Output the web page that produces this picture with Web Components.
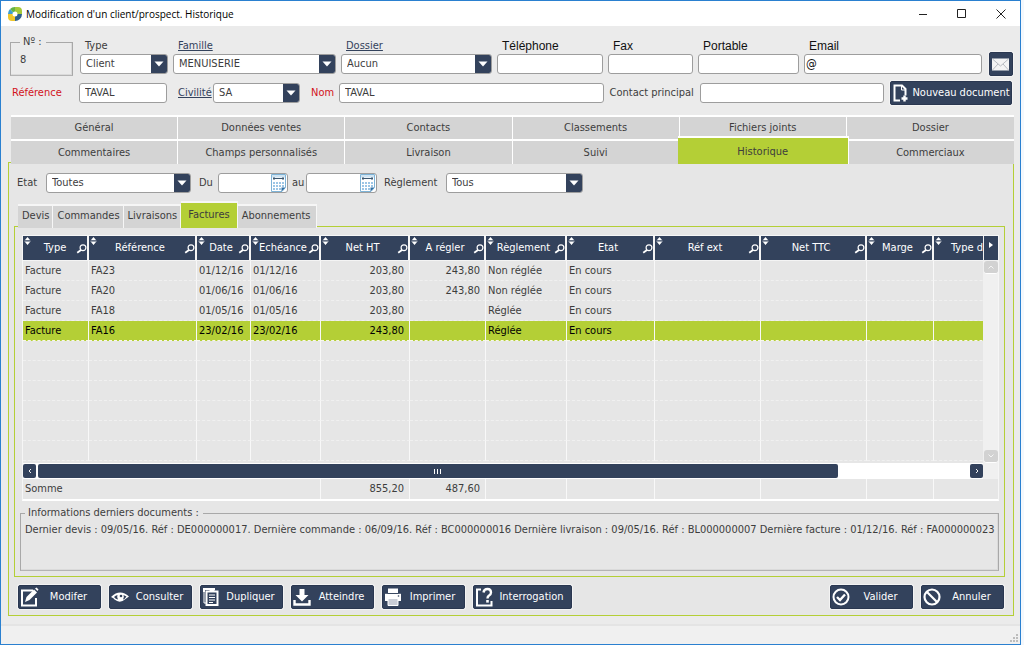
<!DOCTYPE html>
<html lang="fr">
<head>
<meta charset="utf-8">
<meta name="viewport" content="width=device-width, initial-scale=1">
<title>Modification d'un client/prospect. Historique</title>
<style>
html,body{margin:0;height:100%}
body{
  --navy:#33425c;--green:#b4cf36;--ink:#3d3d3d;--face:#ebebeb;--panel:#e6e6e6;--tab:#d4d4d4;--line:#a8a8a8;--red:#d2121c;
  --ui:"DejaVu Sans Condensed","Noto Sans",sans-serif;
  font:11px/14px var(--ui);color:var(--ink);background:#f4f8fc}
</style>
</head>
<body>
<client-window></client-window>
<script>
const html = (s, ...v) => String.raw(s, ...v);
class Base extends HTMLElement {
  constructor(){ super(); this.attachShadow({mode:'open'}); }
  connectedCallback(){ this.shadowRoot.innerHTML = '<style>*{box-sizing:border-box}' + this.styles() + '</style>' + this.view(); }
  attr(n, d=''){ return this.getAttribute(n) ?? d; }
}

const control = `
:host{display:flex;flex-direction:column;min-width:0;gap:1px}
:host([inline]){flex-direction:row;align-items:center;gap:var(--gap,8px)}
label{white-space:nowrap;padding-left:5px;line-height:14px;flex:none}
:host([inline]) label{padding:0;width:var(--lw,auto)}
:host([alt]) label{font-family:"Liberation Sans",sans-serif;font-size:12px;color:#111}
:host([required]) label{color:var(--red)}
label a{color:var(--navy)}
.box{position:relative;flex:1 1 auto;min-width:0;height:20px;display:flex;background:#fff;border:1px solid #9d9d9d;border-radius:3px;overflow:hidden}
:host([inline]) .box{flex:1 1 0}
input,select{appearance:none;border:0;outline:0;margin:0;padding:0 0 0 5px;width:100%;min-width:0;height:18px;background:transparent;font:11px/18px var(--ui);color:var(--ink)}
:host([alt]) input{padding-left:1px;font-size:12px;color:#111}
`;
const lbl = el => el.hasAttribute('link') ? `<a href="#">${el.attr('label')}</a>` : el.attr('label');

customElements.define('text-field', class extends Base {
  styles(){ return control; }
  view(){ return html`<label for="c">${lbl(this)}</label><div class="box"><input id="c" type="text" value="${this.attr('value')}"></div>`; }
});
customElements.define('select-field', class extends Base {
  styles(){ return control + `.arrow{position:absolute;right:0;top:0;bottom:0;width:16px;background:var(--navy);pointer-events:none}svg{display:block}`; }
  view(){ return html`<label for="c">${lbl(this)}</label><div class="box"><select id="c"><option>${this.attr('value')}</option></select><span class="arrow"><svg width="16" height="18"><path d="M3.5 6.5h9L8 11.500z" fill="#fff"/></svg></span></div>`; }
});
customElements.define('date-field', class extends Base {
  styles(){ return control + `button{border:0;padding:0;margin:0;background:none;flex:none;width:17px;height:18px}svg{display:block}`; }
  view(){ return html`<label for="c">${lbl(this)}</label><div class="box"><input id="c" type="text"><button type="button" aria-label="Calendrier"><svg width="17" height="18" viewBox="0 0 17 18"><path d="M1.500.5h14v13l-3.500 4H1.500z" fill="#fff" stroke="#7eb4d8"/><path d="M2 1h13v2.500H2z" fill="#cfe4f3"/><path d="M3 4.500h11" stroke="#3c566e"/><path d="M4 3v3M13 3v3" stroke="#3c566e"/><path d="M3 8h2v2H3zm3 0h2v2H6zm3 0h2v2H9zm3 0h2v2h-2zM3 11h2v2H3zm3 0h2v2H6zm3 0h2v2H9zm3 0h2v2h-2zM3 14h2v2H3zm3 0h2v2H6zm3 0h2v2H9z" fill="#9cc6e6"/><path d="M11.500 17.500v-4h4z" fill="#2f6fa3"/></svg></button></div>`; }
});

const icons = {
  edit:'<path d="M14 3.500H3v15h14V11" fill="none" stroke="#fff" stroke-width="2"/><path d="M6 15l1.500-5L15 2.500 18 5.500 10.500 13z" fill="#fff"/><path d="M16 1.500l1.500-1 2 2-1 1.500z" fill="#fff"/>',
  eye:'<path d="M1 10Q10 1.500 19 9.500Q16.500 11 15.500 12Q10 17 4.500 12.500Q4 11 1 10z" fill="#fff"/><path d="M4 10Q5.500 8.500 7.500 8Q6.500 10 8 12.500Q5.500 12 4 10zM16.500 9.500Q15 8.500 13.500 8Q14.500 10 13 12.500Q15 12 16.500 9.500z" fill="#33425c"/><circle cx="11" cy="9" r="1.300" fill="#33425c"/>',
  copy:'<path d="M3 5V2h11" fill="none" stroke="#fff" stroke-width="2"/><path d="M5.500 4.500h11v13.500h-11z" fill="#33425c" stroke="#fff" stroke-width="2"/><path d="M3 5v11h2M8 8h6M8 10.500h6M8 13h6M8 15.500h4" stroke="#fff" fill="none"/><path d="M8.500 2h5v3h-5z" fill="#fff"/>',
  download:'<path d="M7.500 2h5v6h4L10 14.500 3.500 8h4z" fill="#fff"/><path d="M2.500 13v4.500h15V13" fill="none" stroke="#fff" stroke-width="2.400"/>',
  print:'<path d="M5 1.500h10V6H5z" fill="#fff"/><path d="M2 6.800h16v7.200H2z" fill="#fff"/><path d="M5 11.500h10v7H5z" fill="#c9cdd6" stroke="#fff"/><path d="M4.500 6.500h11" stroke="#33425c" stroke-width=".8"/><circle cx="15.500" cy="9" r=".8" fill="#33425c"/>',
  ask:'<path d="M7 2.500H3v16h14.500V14" fill="none" stroke="#fff" stroke-width="2"/><path d="M9.500 5.500Q10 2 13.500 2T17 5.500Q17 7.500 14.800 8.800Q13.500 9.800 13.500 11.500" fill="none" stroke="#fff" stroke-width="2.400"/><path d="M12.200 13h2.600v2.600h-2.600z" fill="#fff"/>',
  ok:'<circle cx="10" cy="10" r="7.500" fill="none" stroke="#fff" stroke-width="2"/><path d="M6 10l3 3 5-5.500" fill="none" stroke="#fff" stroke-width="2.400"/>',
  no:'<circle cx="10" cy="10" r="7.500" fill="none" stroke="#fff" stroke-width="2.200"/><path d="M5 5l10 10" stroke="#fff" stroke-width="2.200"/>',
  doc:'<path d="M9 17.500H3.500v-15H11L14.500 6v6.500" fill="none" stroke="#fff" stroke-width="2"/><path d="M10.500 2v5h4.500" fill="none" stroke="#fff"/><path d="M13.500 12.500v6M10.500 15.500h6" stroke="#fff" stroke-width="2.400"/>',
  mail:'<path d="M2 4.500h17v12H2z" fill="#f4f4f4"/><path d="M2.500 5l8 7L18.500 5M2.500 16l5.500-6M18.500 16l-5.500-6" fill="none" stroke="#b9bcc2"/>'
};
customElements.define('action-button', class extends Base {
  styles(){ return `:host{display:block;flex:none;width:83px}
  :host([wide]){width:99px}:host([fit]){width:122px}:host([icon-only]){width:24px}
  button{display:flex;align-items:center;width:100%;height:24px;margin:0;padding:0 2px 0 0;border:1px solid #2a3750;border-radius:2px;background:var(--navy);color:#fff;font:11px/14px var(--ui);box-shadow:0 0 0 1px #f3f3f3}
  svg{flex:none}span{flex:1;text-align:center;white-space:nowrap}
  :host([fit]) button{padding-right:0}
  :host([icon-only]) span{display:none}`; }
  view(){ return html`<button type="button" aria-label="${this.attr('name', this.textContent)}"><svg width="20" height="20" viewBox="0 0 20 20" aria-hidden="true">${icons[this.attr('icon')]}</svg><span><slot></slot></span></button>`; }
});

customElements.define('main-tabs', class extends Base {
  styles(){ return `:host{display:grid;grid-template-columns:repeat(6,1fr);position:relative;z-index:1}
  ::slotted(a){box-sizing:border-box;height:24px;padding-top:4px;border-top:2px solid #fff;border-right:1px solid #fff;background:var(--tab);color:var(--ink);text-decoration:none;text-align:center;line-height:14px}
  ::slotted(a:nth-of-type(n+7)){height:25px;padding-top:5px}
  ::slotted(a:nth-of-type(6n)){border-right:0}
  ::slotted(a[aria-current]){background:var(--green);margin:-3px -2px 0;padding-top:7px;height:28px;z-index:1}`; }
  view(){ return `<slot></slot>`; }
});
customElements.define('sub-tabs', class extends Base {
  styles(){ return `:host{display:flex;align-items:flex-end;position:relative;z-index:1;padding-left:4px}
  ::slotted(a){box-sizing:border-box;height:24px;padding:2px 3px 0 4px;border-top:2px solid #f6f6f6;border-right:1px solid #f6f6f6;background:var(--tab);color:var(--ink);text-decoration:none;text-align:center;line-height:16px;white-space:nowrap}
  ::slotted(a[aria-current]){background:var(--green);height:27px;padding:4px 7px 0}
  ::slotted(a:last-of-type){padding-right:6px}`; }
  view(){ return `<slot></slot>`; }
});
customElements.define('group-box', class extends Base {
  styles(){ return `:host{display:block;min-width:0}fieldset{margin:0;min-width:0;height:100%;border:1px solid var(--line);border-bottom-color:#b4b4b4;padding:var(--pad,3px 3px 0 4px);box-shadow:inset -1px -1px #dadada}legend{padding:0 4px 0 3px;line-height:14px}`; }
  view(){ return html`<fieldset><legend>${this.attr('label')}</legend><slot></slot></fieldset>`; }
});

customElements.define('data-grid', class extends Base {
  styles(){ return `:host{display:grid;grid-template-columns:minmax(0,1fr) 15px;grid-template-rows:minmax(226px,1fr) 16px 20px;border:1px solid #f6f6f6;border-bottom:2px solid #fff}
  .view{overflow:hidden;min-width:0}
  table{border-collapse:separate;border-spacing:0;table-layout:fixed;width:1010px}
  th{position:relative;height:25px;padding:0 4px 0 0;background:var(--navy);color:#fff;font-weight:400;border-right:2px solid #f4f4f4;border-bottom:1px solid #f4f4f4;white-space:nowrap;text-align:center}
  th svg{position:absolute;display:block}.s{left:1px;top:1px}.m{right:0;top:8px}
  th:first-child{padding:0}
  th:last-child{text-align:left;padding-left:17px}
  td{height:20px;padding:0 1px 0 2px;border-right:1px solid #f8f8f8;border-bottom:1px dashed #f0f0f0;line-height:14px;white-space:nowrap;overflow:hidden}
  td.n{text-align:right;padding-right:5px}
  tr.on td{background:var(--green);color:#000;border-bottom-color:#f8f8e8}
  .sum td{border-bottom:0}
  .side{display:flex;flex-direction:column;background:#f0f0f0}
  button{display:flex;align-items:center;justify-content:center;border:0;padding:0;margin:0}
  .more{height:24px;background:var(--navy);margin:0 0 1px 1px;width:14px;padding-bottom:6px}
  .v{width:14px;height:13px;margin-left:1px;border-radius:3px;background:#d2d2d2;border-bottom:1px solid #fff}
  .grow{flex:1}
  .h{display:flex;align-items:center;background:#fff;padding:1px 0}
  .h button{width:13px;height:14px;border-radius:2px;background:var(--navy)}
  .track{flex:1;padding:0 2px}.thumb{display:flex;align-items:center;justify-content:center;gap:2px;width:86%;height:14px;border-radius:2px;background:var(--navy)}
  .thumb i{width:1px;height:5px;background:#fff}`; }
  view(){
    const cols = [['Type',66],['Référence',108],['Date',54],['Echéance',70],['Net HT',89],['A régler',76],['Règlement',81],['Etat',88],['Réf ext',106],['Net TTC',106],['Marge',67],['Type d',99]];
    const rows = [
      ['Facture','FA23','01/12/16','01/12/16','203,80','243,80','Non réglée','En cours'],
      ['Facture','FA20','01/06/16','01/06/16','203,80','243,80','Non réglée','En cours'],
      ['Facture','FA18','01/05/16','01/05/16','203,80','','Réglée','En cours'],
      ['Facture','FA16','23/02/16','23/02/16','243,80','','Réglée','En cours'],[],[],[],[],[],[]];
    const cg = '<colgroup>' + cols.map(c => `<col style="width:${c[1]}px">`).join('') + '</colgroup>';
    const sort = '<svg class="s" width="7" height="9" viewBox="0 0 7 9"><path d="M3.500 0l2.500 3H1zM3.500 8L1 5h5zM.5 3.700h6v.8h-6z" fill="#fff"/></svg>';
    const mag = '<svg class="m" width="11" height="10" viewBox="0 0 11 10"><circle cx="7" cy="3.700" r="2.900" fill="none" stroke="#fff" stroke-width="1.200"/><path d="M5 6L1.200 8.800" stroke="#fff" stroke-width="1.800"/></svg>';
    const chev = d => `<svg width="8" height="8" viewBox="0 0 8 8"><path d="${d}" fill="none" stroke="#f4f4f4"/></svg>`;
    return `<div class="view"><table aria-label="Factures">${cg}<thead><tr>${cols.map(c => `<th>${sort}${c[0]}${mag}</th>`).join('')}</tr></thead><tbody>${
      rows.map((r,i) => `<tr${i===3?' class="on"':''}>${cols.map((c,j) => `<td${j===4||j===5?' class="n"':''}>${r[j]||''}</td>`).join('')}</tr>`).join('')}</tbody></table></div>
    <div class="side"><button class="more" type="button" aria-label="Colonnes suivantes"><svg width="4" height="6"><path d="M0 0l4 3-4 3z" fill="#fff"/></svg></button>
    <button class="v" type="button" aria-label="Monter">${chev('M1.500 5.500L4 3l2.500 2.500')}</button><span class="grow"></span><button class="v" type="button" aria-label="Descendre">${chev('M1.500 2.500L4 5l2.500-2.500')}</button></div>
    <div class="h"><button type="button" aria-label="Défiler à gauche">${chev('M5 2L3 4l2 2')}</button><div class="track"><div class="thumb"><i></i><i></i><i></i></div></div><button type="button" aria-label="Défiler à droite">${chev('M3 2l2 2-2 2')}</button></div><div class="side"></div>
    <div class="view"><table class="sum" aria-label="Totaux">${cg}<tbody><tr><td colspan="4">Somme</td><td class="n">855,20</td><td class="n">487,60</td><td></td><td></td><td></td><td></td><td></td><td></td></tr></tbody></table></div><div></div>`;
  }
});

customElements.define('title-bar', class extends Base {
  styles(){ return `:host{display:flex;align-items:center;height:25px;flex:none;background:#fff;color:#000;padding:0 0 0 7px}
  h1{flex:1;margin:0 0 0 4px;font:400 10px/16px "Open Sans","Noto Sans",sans-serif}
  button{width:39px;height:24px;padding:0;border:0;background:none;display:flex;align-items:center;justify-content:center}`; }
  view(){ return html`<svg width="14" height="14" viewBox="0 0 14 14" aria-hidden="true"><path d="M7 0a7 7 0 0 0-5 2L5 5.500Q6 4.500 7 4.500z" fill="#62b246"/><path d="M7 0h3a4 4 0 0 1 4 4v3H9.500Q9.500 4.500 7 4.500z" fill="#a5c93a"/><path d="M14 7a7 7 0 0 1-7 7V9.500Q9.500 9.500 9.500 7z" fill="#2d5f8c"/><path d="M7 14H4a4 4 0 0 1-4-4V7h4.500Q4.500 9.500 7 9.500z" fill="#efc62b"/><path d="M0 7a7 7 0 0 1 2-5l3 3.500Q4.500 6 4.500 7z" fill="#3d9ed0"/></svg>
  <h1><slot></slot></h1>
  <button type="button" aria-label="Réduire"><svg width="10" height="10"><path d="M1 5.500h8" stroke="#222"/></svg></button>
  <button type="button" aria-label="Agrandir"><svg width="10" height="10"><path d="M.5.500h8v8h-8z" fill="none" stroke="#222"/></svg></button>
  <button type="button" aria-label="Fermer"><svg width="10" height="10"><path d="M.5.500l9 9M9.500.500l-9 9" stroke="#222"/></svg></button>`; }
});

customElements.define('client-window', class extends Base {
  styles(){ return `:host{display:flex;flex-direction:column;box-sizing:border-box;min-height:100vh;margin-right:3px;border:1px solid #2a80d0;background:var(--face)}
  main{flex:1;display:flex;flex-direction:column;padding:9px 6px 8px 7px}
  .row1{display:flex;align-items:flex-end;gap:7px;padding:0 1px 0 2px}
  .row1 group-box{width:63px;height:41px;flex:none;--pad:4px 9px 0}
  .fields{flex:1;display:grid;grid-template-columns:88fr 163fr 151fr 106fr 85fr 101fr 178fr;gap:5px;margin-bottom:2px}
  .row2{display:flex;align-items:center;gap:6px;padding:0 2px 0 4px;margin-top:5px}
  .ref{width:155px;--lw:67px;--gap:0px;margin-right:5px}
  .civ{width:122px;--lw:35px;--gap:0px;margin-right:5px}
  .nom{flex:292;--lw:28px;--gap:0px}
  .con{flex:274;--lw:90px;--gap:0px}
  main-tabs{margin:10px 0 -2px 3px}
  .panel{flex:1;display:flex;flex-direction:column;background:var(--panel);border:1px solid var(--green);padding:10px 8px 6px 5px}
  .filter{display:flex;align-items:center;padding-left:3px;gap:4px}
  .filter>:nth-child(1){width:174px;--lw:29px;--gap:0px;margin-right:4px}
  .filter>:nth-child(2){width:89px;--lw:19px;--gap:0px}
  .filter>:nth-child(3){width:85px;--lw:14px;--gap:0px;margin-right:3px}
  .filter>:nth-child(4){width:199px;--lw:62px;--gap:0px}
  sub-tabs{margin-top:8px;margin-bottom:-2px}
  .inner{flex:1;display:flex;flex-direction:column;border:1px solid var(--green);padding:8px 5px 5px 5px}
  data-grid{flex:1;margin-left:2px}
  .info{height:65px;flex:none;margin-top:5px}
  p{margin:0;white-space:nowrap}
  .actions{display:flex;gap:8px;padding:8px 1px 0 4px}
  .space{flex:1}
  footer{flex:none;display:flex;justify-content:flex-end;align-items:flex-end;background:#f0f0f0;border-top:2px solid #e4e4e4;padding:0 1px 1px 0;height:20px}`; }
  view(){ return html`
  <title-bar>Modification d'un client/prospect. Historique</title-bar>
  <main>
    <div class="row1">
      <group-box label="Nº :">8</group-box>
      <div class="fields">
        <select-field label="Type" value="Client"></select-field>
        <select-field link label="Famille" value="MENUISERIE"></select-field>
        <select-field link label="Dossier" value="Aucun"></select-field>
        <text-field alt label="Téléphone"></text-field>
        <text-field alt label="Fax"></text-field>
        <text-field alt label="Portable"></text-field>
        <text-field alt label="Email" value="@"></text-field>
      </div>
      <action-button icon="mail" icon-only name="Envoyer un email"></action-button>
    </div>
    <div class="row2">
      <text-field class="ref" inline required label="Référence" value="TAVAL"></text-field>
      <select-field class="civ" inline link label="Civilité" value="SA"></select-field>
      <text-field class="nom" inline required label="Nom" value="TAVAL"></text-field>
      <text-field class="con" inline label="Contact principal"></text-field>
      <action-button icon="doc" fit>Nouveau document</action-button>
    </div>
    <main-tabs>
      <a href="#">Général</a><a href="#">Données ventes</a><a href="#">Contacts</a><a href="#">Classements</a><a href="#">Fichiers joints</a><a href="#">Dossier</a>
      <a href="#">Commentaires</a><a href="#">Champs personnalisés</a><a href="#">Livraison</a><a href="#">Suivi</a><a href="#" aria-current="page">Historique</a><a href="#">Commerciaux</a>
    </main-tabs>
    <section class="panel">
      <div class="filter">
        <select-field inline label="Etat" value="Toutes"></select-field>
        <date-field inline label="Du"></date-field>
        <date-field inline label="au"></date-field>
        <select-field inline label="Règlement" value="Tous"></select-field>
      </div>
      <sub-tabs><a href="#">Devis</a><a href="#">Commandes</a><a href="#">Livraisons</a><a href="#" aria-current="page">Factures</a><a href="#">Abonnements</a></sub-tabs>
      <div class="inner">
        <data-grid></data-grid>
        <group-box class="info" label="Informations derniers documents :"><p>Dernier devis : 09/05/16. Réf : DE000000017. Dernière commande : 06/09/16. Réf : BC000000016 Dernière livraison : 09/05/16. Réf : BL000000007 Dernière facture : 01/12/16. Réf : FA000000023</p></group-box>
      </div>
      <div class="actions">
        <action-button icon="edit">Modifer</action-button>
        <action-button icon="eye">Consulter</action-button>
        <action-button icon="copy">Dupliquer</action-button>
        <action-button icon="download">Atteindre</action-button>
        <action-button icon="print">Imprimer</action-button>
        <action-button icon="ask" wide>Interrogation</action-button>
        <span class="space"></span>
        <action-button icon="ok">Valider</action-button>
        <action-button icon="no">Annuler</action-button>
      </div>
    </section>
  </main>
  <footer><svg width="9" height="9" aria-hidden="true"><path d="M6 0h2v2H6zM3 3h2v2H3zM6 3h2v2H6zM0 6h2v2H0zM3 6h2v2H3zM6 6h2v2H6z" fill="#bcbcbc"/></svg></footer>`; }
});
</script>
</body>
</html>
